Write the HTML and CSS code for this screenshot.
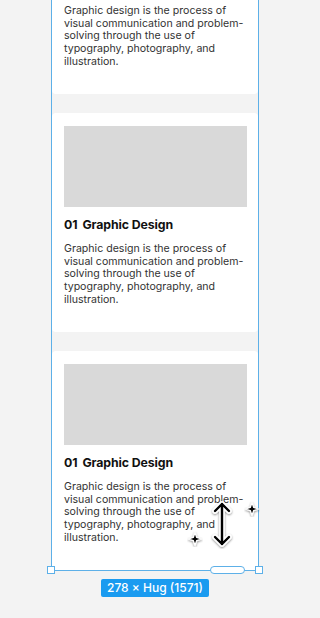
FILE: index.html
```html
<!DOCTYPE html>
<html>
<head>
<meta charset="utf-8">
<link rel="stylesheet" href="styles.css">
</head>
<body>
<div class="canvas">
  <div class="frame">
    <div class="card card-partial">
      <p class="desc">Graphic design is the process of visual communication and problem-solving through the use of typography, photography, and illustration.</p>
    </div>
    <div class="card">
      <div class="thumb"></div>
      <h3 class="title"><span class="num">01</span>Graphic Design</h3>
      <p class="desc">Graphic design is the process of visual communication and problem-solving through the use of typography, photography, and illustration.</p>
    </div>
    <div class="card">
      <div class="thumb"></div>
      <h3 class="title"><span class="num">01</span>Graphic Design</h3>
      <p class="desc">Graphic design is the process of visual communication and problem-solving through the use of typography, photography, and illustration.</p>
    </div>
    <span class="handle handle-left"></span>
    <span class="handle handle-right"></span>
    <span class="pill"></span>
    <svg class="cursor" width="26" height="50" viewBox="0 0 26 50">
      <defs>
        <filter id="sh" x="-50%" y="-50%" width="200%" height="200%">
          <feDropShadow dx="0" dy="1" stdDeviation="1.2" flood-color="#000" flood-opacity="0.45"/>
        </filter>
      </defs>
      <g filter="url(#sh)" fill="none" stroke-linecap="round" stroke-linejoin="round">
        <path d="M13 5 V45 M6 12 L13 5 L20 12 M6 38 L13 45 L20 38" stroke="#fff" stroke-width="5.5"/>
        <path d="M13 5 V45 M6 12 L13 5 L20 12 M6 38 L13 45 L20 38" stroke="#000" stroke-width="2.4"/>
      </g>
    </svg>
    <svg class="spark spark-a" width="16" height="16" viewBox="0 0 16 16">
      <g filter="url(#sh)">
        <path d="M8 1.5 L9.6 6.4 L14.5 8 L9.6 9.6 L8 14.5 L6.4 9.6 L1.5 8 L6.4 6.4 Z" fill="#000" stroke="#fff" stroke-width="1.3" stroke-linejoin="round"/>
      </g>
    </svg>
    <svg class="spark spark-b" width="16" height="16" viewBox="0 0 16 16">
      <g filter="url(#sh)">
        <path d="M8 1.5 L9.6 6.4 L14.5 8 L9.6 9.6 L8 14.5 L6.4 9.6 L1.5 8 L6.4 6.4 Z" fill="#000" stroke="#fff" stroke-width="1.3" stroke-linejoin="round"/>
      </g>
    </svg>
  </div>
  <div class="label-row">
    <span class="size-label">278 × Hug (1571)</span>
  </div>
</div>
</body>
</html>
```
FILE: styles.css
```css
html, body {
  margin: 0;
  padding: 0;
  background: #f3f3f3;
  height: 618px;
  overflow: hidden;
}
.canvas {
  width: 320px;
  font-family: Inter, "Noto Sans", sans-serif;
}
.frame {
  position: relative;
  margin-left: 51px;
  width: 206px;
  border: 1px solid #5db0e8;
  border-top: none;
  background: #f3f3f3;
  display: flex;
  flex-direction: column;
  gap: 19px;
}
.card {
  background: #ffffff;
  border-radius: 4px;
  padding: 13px 11px 25px 12px;
  height: 219px;
  box-sizing: border-box;
}
.card-partial {
  height: 94px;
  padding-top: 0;
  border-radius: 0 0 4px 4px;
}
.card-partial .desc {
  margin-top: 5px;
}
.thumb {
  height: 81px;
  background: #d9d9d9;
}
.title {
  margin: 10px 0 0;
  font-size: 12.3px;
  line-height: 16px;
  font-weight: 700;
  color: #111;
  letter-spacing: -0.1px;
}
.num {
  margin-right: 5px;
}
.desc {
  margin: 10px 0 0;
  font-size: 10.6px;
  line-height: 12.7px;
  color: #333;
  width: 182px;
}
.handle {
  position: absolute;
  bottom: -4px;
  width: 6px;
  height: 6px;
  background: #fff;
  border: 1px solid #5db0e8;
}
.handle-left { left: -5px; }
.handle-right { right: -5px; }
.pill {
  position: absolute;
  bottom: -4px;
  left: 158px;
  width: 33px;
  height: 6px;
  background: #fff;
  border: 1px solid #5db0e8;
  border-radius: 4px;
}
.cursor {
  position: absolute;
  left: 157px;
  top: 499px;
}
.spark {
  position: absolute;
}
.spark-a { left: 192px; top: 501px; }
.spark-b { left: 135px; top: 531px; }
.label-row {
  display: flex;
  justify-content: center;
  width: 208px;
  margin-left: 51px;
  margin-top: 8px;
}
.size-label {
  background: #1a9bf0;
  color: #fff;
  font-size: 12px;
  font-weight: 500;
  line-height: 18px;
  padding: 0 6px;
  border-radius: 2px;
}
```
